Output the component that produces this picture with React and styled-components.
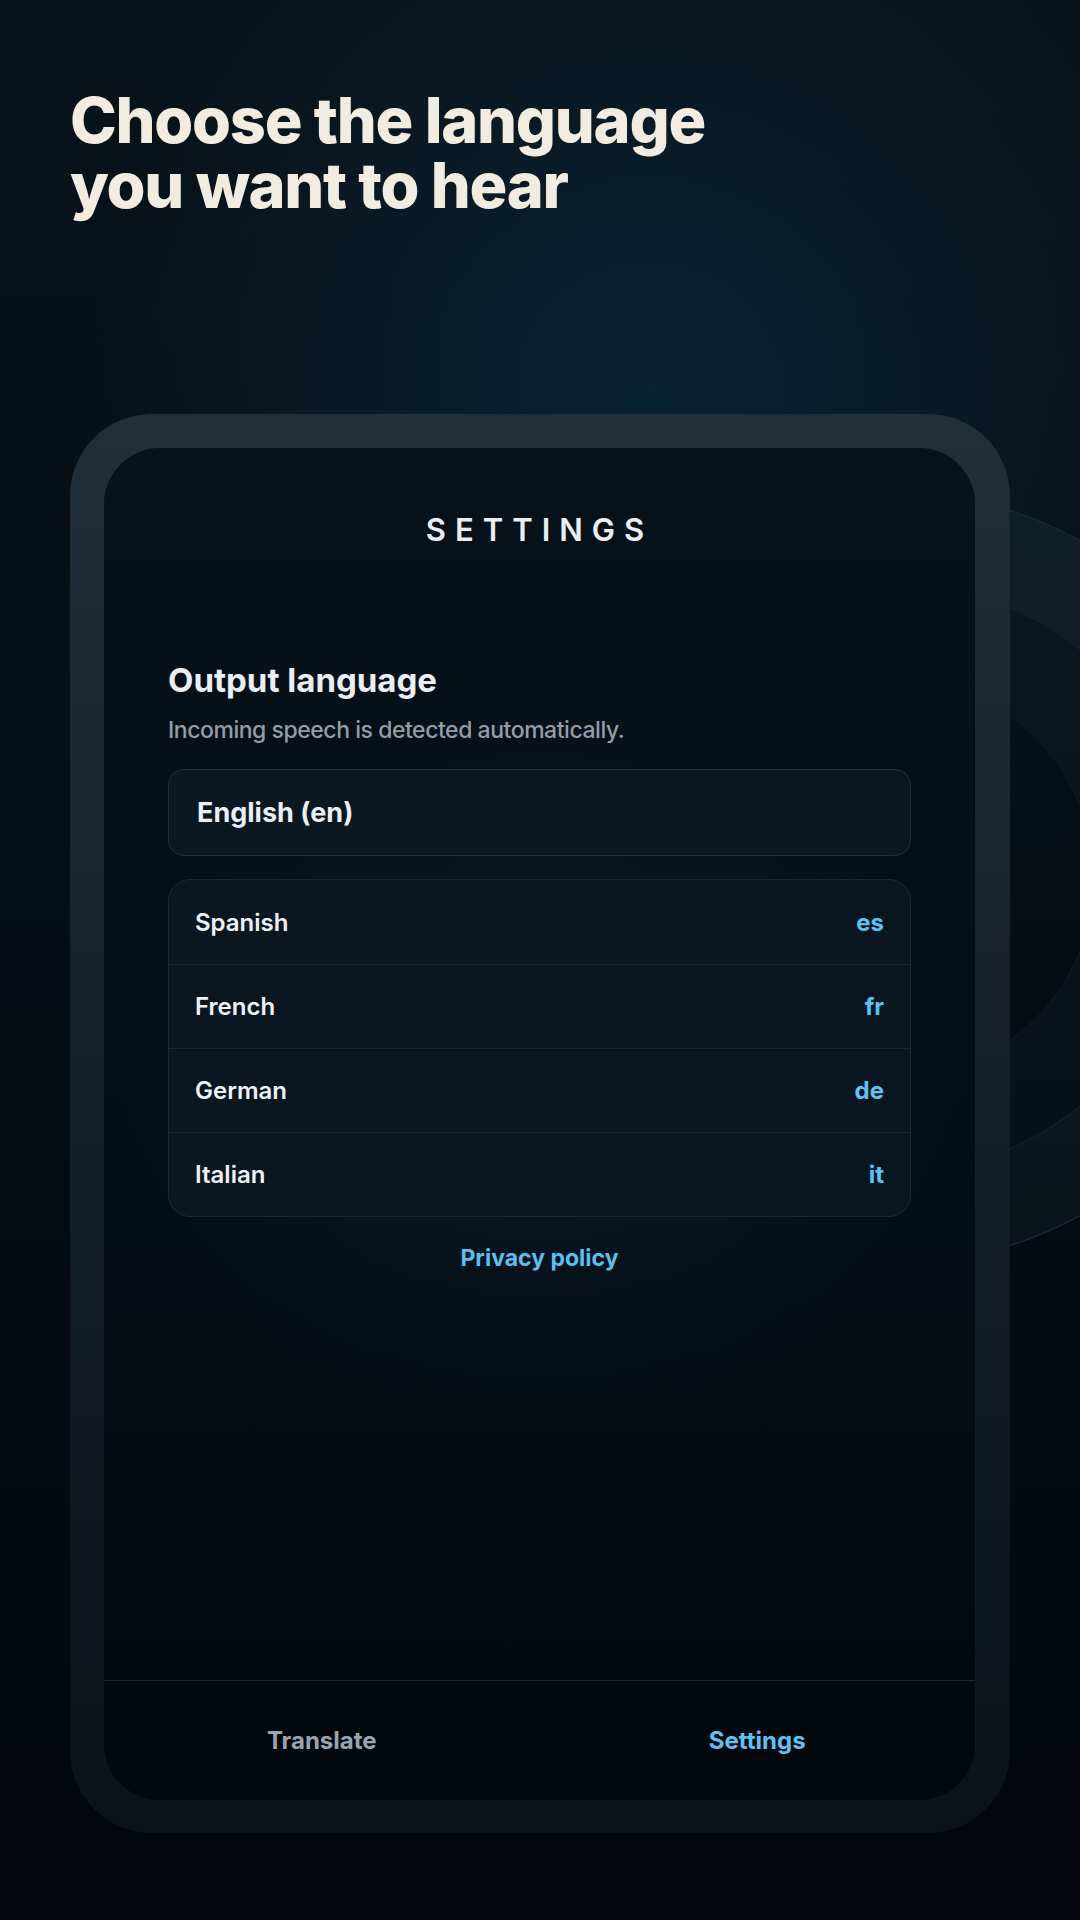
import React from 'react';
import styled, { createGlobalStyle } from 'styled-components';

const GlobalStyle = createGlobalStyle`
  html, body {
    margin: 0;
    padding: 0;
    background: #02060a;
  }
  * {
    box-sizing: border-box;
  }
`;

const Page = styled.div`
  position: relative;
  width: 1080px;
  height: 1920px;
  overflow: hidden;
  padding: 88px 70px 0 70px;
  font-family: Inter, "Noto Sans", "Liberation Sans", sans-serif;
  background:
    radial-gradient(ellipse 560px 520px at 650px 390px, rgba(10, 36, 54, 0.95) 0%, rgba(10, 36, 54, 0) 100%),
    linear-gradient(180deg, #09131b 0%, #060e15 45%, #02060a 100%);
`;

const Rings = styled.svg`
  position: absolute;
  left: 0;
  top: 0;
  width: 1080px;
  height: 1920px;
  z-index: 0;
`;

const Heading = styled.h1`
  position: relative;
  z-index: 1;
  margin: 0;
  font-size: 63px;
  line-height: 65px;
  font-weight: 800;
  letter-spacing: -0.02em;
  color: #f2ebe0;
`;

const HeadLine = styled.span`
  display: block;
`;

const Phone = styled.div`
  position: relative;
  z-index: 1;
  margin-top: 196px;
  width: 940px;
  height: 1419px;
  padding: 34px 35px 33px 34px;
  border-radius: 82px;
  background: linear-gradient(180deg, #212f3a 0%, #16212a 45%, #0b1218 100%);
`;

const Screen = styled.div`
  height: 100%;
  border-radius: 56px;
  overflow: hidden;
  display: flex;
  flex-direction: column;
  background:
    radial-gradient(ellipse 420px 360px at 50% 46%, rgba(12, 30, 42, 0.8) 0%, rgba(12, 30, 42, 0) 100%),
    linear-gradient(180deg, #07121a 0%, #050d14 55%, #03080d 100%);
`;

const ScreenTitle = styled.div`
  padding-top: 63px;
  text-align: center;
  font-size: 31px;
  line-height: 38px;
  font-weight: 600;
  letter-spacing: 0.29em;
  color: #e9eef3;
`;

const Content = styled.div`
  flex: 1;
  padding: 111px 64px 0 64px;
  display: flex;
  flex-direction: column;
`;

const SectionTitle = styled.h2`
  margin: 0;
  font-size: 33px;
  line-height: 40px;
  font-weight: 700;
  letter-spacing: 0;
  color: #eaeff4;
`;

const SectionNote = styled.p`
  margin: 15px 0 0 0;
  font-size: 23px;
  line-height: 30px;
  font-weight: 500;
  letter-spacing: -0.02em;
  color: #939ea8;
`;

const Selected = styled.div`
  margin-top: 24px;
  height: 87px;
  display: flex;
  align-items: center;
  padding: 0 28px;
  border: 1px solid #1b3445;
  border-radius: 16px;
  background: #0b1822;
  font-size: 27px;
  font-weight: 700;
  color: #eaeff4;
`;

const LangList = styled.div`
  margin-top: 23px;
  border: 1px solid #1a2a36;
  border-radius: 22px;
  overflow: hidden;
  background: #0a1721;
`;

const LangRow = styled.div`
  height: 84px;
  display: flex;
  align-items: center;
  justify-content: space-between;
  padding: 0 26px 0 26px;
  border-top: ${p => (p.first ? 'none' : '1px solid #1a2834')};
`;

const LangName = styled.span`
  font-size: 24px;
  font-weight: 600;
  color: #eef2f6;
`;

const LangCode = styled.span`
  font-size: 24px;
  font-weight: 700;
  color: #5ec2f2;
`;

const PolicyLink = styled.a`
  margin-top: 26px;
  align-self: center;
  font-size: 23px;
  line-height: 30px;
  font-weight: 700;
  color: #5bbff0;
  text-decoration: none;
`;

const TabBar = styled.div`
  height: 120px;
  display: flex;
  border-top: 1px solid #1d2b36;
  background: #03080d;
`;

const Tab = styled.div`
  flex: 1;
  display: flex;
  align-items: center;
  justify-content: center;
  font-size: 24px;
  font-weight: 700;
  color: ${p => (p.active ? '#5ec2f2' : '#9aa5af')};
`;

const languages = [
  { name: 'Spanish', code: 'es' },
  { name: 'French', code: 'fr' },
  { name: 'German', code: 'de' },
  { name: 'Italian', code: 'it' },
];

function App() {
  return (
    <Page>
      <GlobalStyle />
      <Rings viewBox="0 0 1080 1920">
        <defs>
          <linearGradient id="ringA" x1="0" y1="0" x2="0" y2="1">
            <stop offset="0" stopColor="#0f1f2a" />
            <stop offset="1" stopColor="#0a1318" />
          </linearGradient>
          <linearGradient id="ringB" x1="0" y1="0" x2="0" y2="1">
            <stop offset="0" stopColor="#0a1820" />
            <stop offset="1" stopColor="#081016" />
          </linearGradient>
          <linearGradient id="ringC" x1="0" y1="0" x2="0" y2="1">
            <stop offset="0" stopColor="#071118" />
            <stop offset="1" stopColor="#050b10" />
          </linearGradient>
        </defs>
        <circle cx="895" cy="878" r="385" fill="url(#ringA)" stroke="#15283a" strokeWidth="1.5" />
        <circle cx="895" cy="878" r="294" fill="url(#ringB)" stroke="#122230" strokeWidth="1.2" />
        <circle cx="895" cy="878" r="199" fill="url(#ringC)" stroke="#0f1c27" strokeWidth="1" />
      </Rings>

      <Heading>
        <HeadLine>Choose the language</HeadLine>
        <HeadLine>you want to hear</HeadLine>
      </Heading>

      <Phone>
        <Screen>
          <ScreenTitle>SETTINGS</ScreenTitle>
          <Content>
            <SectionTitle>Output language</SectionTitle>
            <SectionNote>Incoming speech is detected automatically.</SectionNote>
            <Selected>English (en)</Selected>
            <LangList>
              {languages.map((lang, index) => (
                <LangRow key={lang.code} first={index === 0}>
                  <LangName>{lang.name}</LangName>
                  <LangCode>{lang.code}</LangCode>
                </LangRow>
              ))}
            </LangList>
            <PolicyLink href="#">Privacy policy</PolicyLink>
          </Content>
          <TabBar>
            <Tab>Translate</Tab>
            <Tab active>Settings</Tab>
          </TabBar>
        </Screen>
      </Phone>
    </Page>
  );
}

export default App;
